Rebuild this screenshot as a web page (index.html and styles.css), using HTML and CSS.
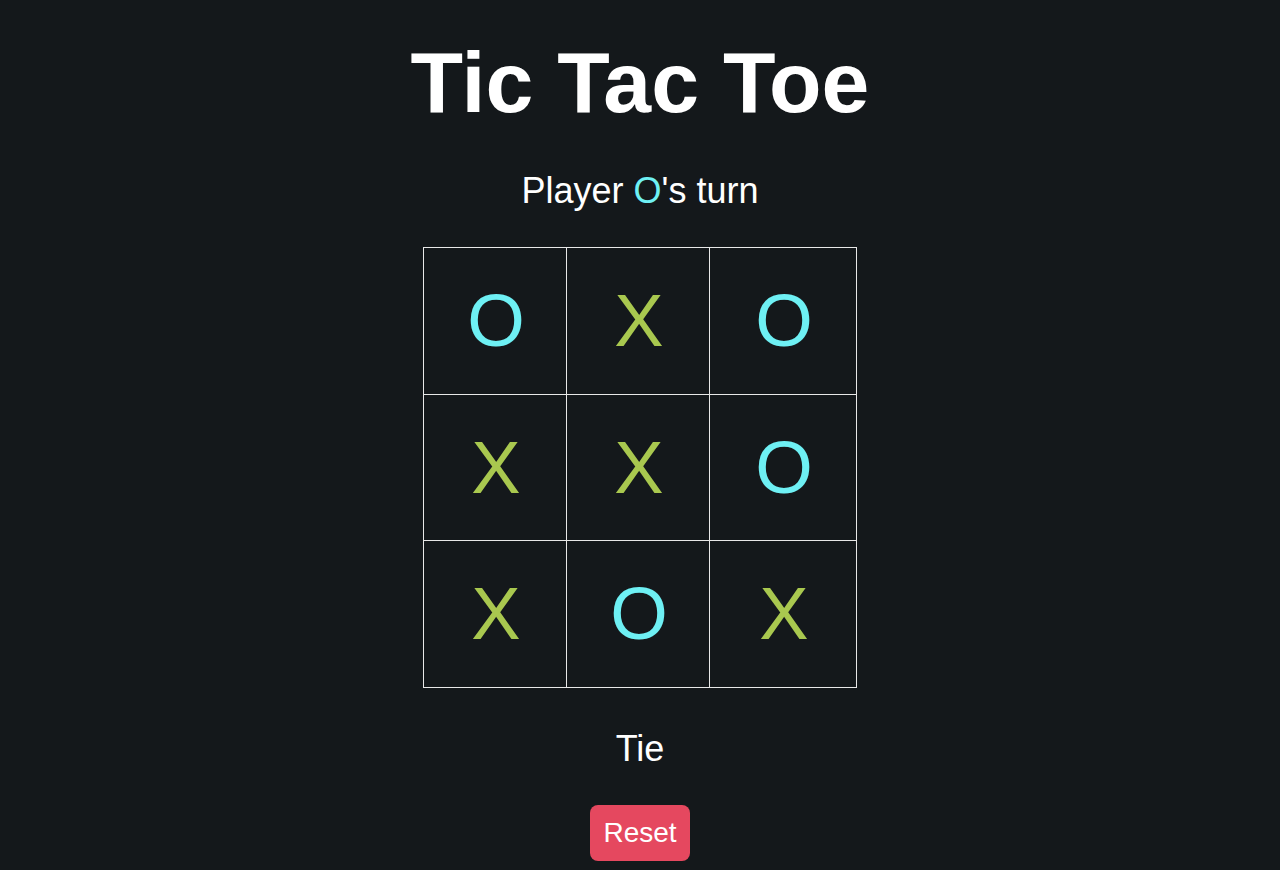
FILE: index.html
```html
<!DOCTYPE html>
<html>
<head>
<meta charset="utf-8">
<title>Tic Tac Toe</title>
<link rel="stylesheet" href="styles.css">
</head>
<body>
<main class="game">
  <h1 class="title">Tic Tac Toe</h1>
  <p class="status">Player <span class="mark-o">O</span>'s turn</p>
  <div class="board">
    <div class="cell mark-o">O</div>
    <div class="cell mark-x">X</div>
    <div class="cell mark-o">O</div>
    <div class="cell mark-x">X</div>
    <div class="cell mark-x">X</div>
    <div class="cell mark-o">O</div>
    <div class="cell mark-x">X</div>
    <div class="cell mark-o">O</div>
    <div class="cell mark-x">X</div>
  </div>
  <p class="result">Tie</p>
  <button class="reset">Reset</button>
</main>
</body>
</html>
```

FILE: styles.css
```css
html, body {
  margin: 0;
  padding: 0;
  background: #14181b;
  height: 100%;
}
body {
  font-family: "Liberation Sans", Arial, Helvetica, sans-serif;
  color: #ffffff;
}
.game {
  display: flex;
  flex-direction: column;
  align-items: center;
}
.title {
  margin: 32px 0 0;
  font-size: 86px;
  line-height: 100px;
  font-weight: 700;
}
.status {
  margin: 38px 0 0;
  font-size: 36px;
  line-height: 42px;
}
.mark-o { color: #6ef0f4; }
.mark-x { color: #a9c84f; }
.board {
  margin-top: 35px;
  display: grid;
  grid-template-columns: 142px 142px 146px;
  grid-template-rows: 146px 145px 146px;
  gap: 1px;
  padding: 1px;
  background: #e8e8e8;
}
.cell {
  background: #14181b;
  display: flex;
  align-items: center;
  justify-content: center;
  padding-left: 2px;
  font-size: 74px;
  line-height: 1;
}
.result {
  margin: 40px 0 0;
  font-size: 36px;
  line-height: 42px;
}
.reset {
  margin-top: 35px;
  font-family: "Liberation Sans", Arial, Helvetica, sans-serif;
  font-size: 28px;
  line-height: 32px;
  color: #ffffff;
  background: #e5485f;
  border: none;
  border-radius: 8px;
  padding: 12px 13px;
}
```
